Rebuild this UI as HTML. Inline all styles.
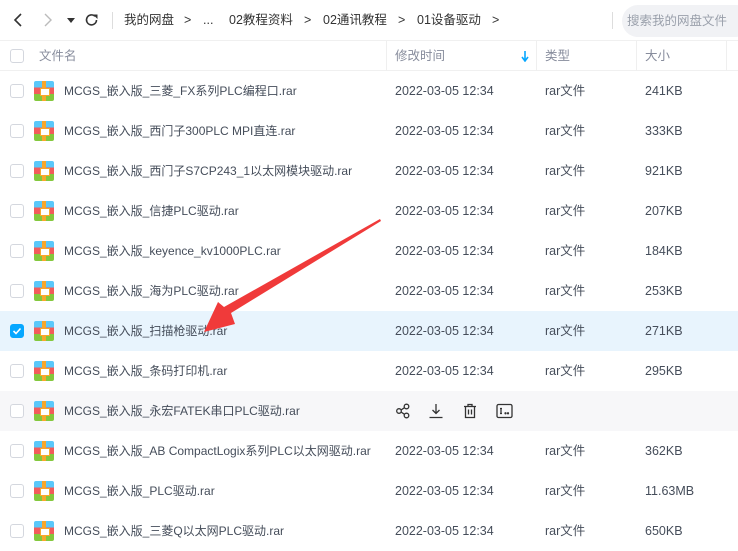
<!DOCTYPE html>
<html><head><meta charset="utf-8"><style>
*{margin:0;padding:0;box-sizing:border-box}
body{width:738px;height:544px;overflow:hidden;background:#fff;font-family:"Liberation Sans","Noto Sans CJK SC",sans-serif;font-size:13px;color:#454d5a;position:relative}
.top{position:absolute;left:0;top:0;width:738px;height:40px;}
.t{position:absolute;top:0;line-height:40px;font-size:12.5px;color:#333;white-space:nowrap}
.hdr{position:absolute;top:40px;left:0;width:738px;height:31px;border-top:1px solid #f0f0f0;border-bottom:1px solid #f0f0f0;color:#878c9c}
.hdr span{position:absolute;top:0;line-height:30px;font-size:12.5px}
.vl{position:absolute;top:0;width:1px;height:30px;background:#efefef}
.row{position:absolute;left:0;width:738px;height:40px}
.cb{position:absolute;left:10px;top:13px;width:14px;height:14px;border:1px solid #d4d7de;border-radius:3px;background:#fff}
.ic{position:absolute;left:34px;top:10px;width:20px;height:20px;border-radius:2px;overflow:hidden;background:linear-gradient(#5ac8fa 0 33%,#f35b5b 33% 66%,#83c83d 66%)}
.ic:before{content:"";position:absolute;left:8px;top:0;width:4px;height:20px;background:#f7a72b}
.ic:after{content:"";position:absolute;left:6px;top:7px;width:8px;height:6px;background:#fff;border:1px solid #f7a72b}
.c{position:absolute;top:0;line-height:40px;white-space:nowrap;font-size:12.5px}
.n{font-size:12px}
</style></head><body>
<div class="top">
<svg style="position:absolute;left:12px;top:12px" width="12" height="16"><path d="M9 2L3 8l6 6" stroke="#333" stroke-width="1.6" fill="none"/></svg>
<svg style="position:absolute;left:42px;top:12px" width="12" height="16"><path d="M3 2l6 6-6 6" stroke="#bbb" stroke-width="1.4" fill="none"/></svg>
<svg style="position:absolute;left:67px;top:18px" width="8" height="6"><path d="M0 0h8L4 5z" fill="#333"/></svg>
<svg style="position:absolute;left:84px;top:12px" width="16" height="16"><path d="M12.5 8A5 5 0 1 1 11 4.3" stroke="#333" stroke-width="1.6" fill="none"/><path d="M9 2.5h4.5V7z" fill="#333"/></svg>
<div style="position:absolute;left:112px;top:12px;width:1px;height:17px;background:#ddd"></div>
<span class="t" style="left:124px">我的网盘</span><span class="t" style="left:184px">&gt;</span><span class="t" style="left:203px">...</span>
<span class="t" style="left:229px">02教程资料</span><span class="t" style="left:304px">&gt;</span><span class="t" style="left:323px">02通讯教程</span><span class="t" style="left:398px">&gt;</span>
<span class="t" style="left:417px">01设备驱动</span><span class="t" style="left:492px">&gt;</span>
<div style="position:absolute;left:612px;top:12px;width:1px;height:17px;background:#ddd"></div>
<div style="position:absolute;left:622px;top:5px;width:130px;height:32px;border-radius:16px;background:#f1f2f5;color:#9aa0ab;padding-left:5px;line-height:32px;font-size:12.5px;white-space:nowrap">搜索我的网盘文件</div>
</div>
<div class="hdr">
<div class="cb" style="top:8px"></div>
<span style="left:39px">文件名</span>
<div class="vl" style="left:386px"></div><span style="left:395px">修改时间</span>
<svg style="position:absolute;left:521px;top:10px" width="8" height="11"><path d="M4 0v9M1 6l3 4 3-4" stroke="#06a7ff" stroke-width="1.6" fill="none"/></svg>
<div class="vl" style="left:536px"></div><span style="left:545px">类型</span>
<div class="vl" style="left:636px"></div><span style="left:645px">大小</span>
<div class="vl" style="left:726px"></div>
</div>
<div class="row" style="top:71px"><div class="cb"></div><div class="ic"></div><span class="c n" style="left:64px">MCGS_嵌入版_三菱_FX系列PLC编程口.rar</span><span class="c" style="left:395px">2022-03-05 12:34</span><span class="c" style="left:545px">rar文件</span><span class="c" style="left:645px">241KB</span></div>
<div class="row" style="top:111px"><div class="cb"></div><div class="ic"></div><span class="c n" style="left:64px">MCGS_嵌入版_西门子300PLC MPI直连.rar</span><span class="c" style="left:395px">2022-03-05 12:34</span><span class="c" style="left:545px">rar文件</span><span class="c" style="left:645px">333KB</span></div>
<div class="row" style="top:151px"><div class="cb"></div><div class="ic"></div><span class="c n" style="left:64px">MCGS_嵌入版_西门子S7CP243_1以太网模块驱动.rar</span><span class="c" style="left:395px">2022-03-05 12:34</span><span class="c" style="left:545px">rar文件</span><span class="c" style="left:645px">921KB</span></div>
<div class="row" style="top:191px"><div class="cb"></div><div class="ic"></div><span class="c n" style="left:64px">MCGS_嵌入版_信捷PLC驱动.rar</span><span class="c" style="left:395px">2022-03-05 12:34</span><span class="c" style="left:545px">rar文件</span><span class="c" style="left:645px">207KB</span></div>
<div class="row" style="top:231px"><div class="cb"></div><div class="ic"></div><span class="c n" style="left:64px">MCGS_嵌入版_keyence_kv1000PLC.rar</span><span class="c" style="left:395px">2022-03-05 12:34</span><span class="c" style="left:545px">rar文件</span><span class="c" style="left:645px">184KB</span></div>
<div class="row" style="top:271px"><div class="cb"></div><div class="ic"></div><span class="c n" style="left:64px">MCGS_嵌入版_海为PLC驱动.rar</span><span class="c" style="left:395px">2022-03-05 12:34</span><span class="c" style="left:545px">rar文件</span><span class="c" style="left:645px">253KB</span></div>
<div class="row" style="top:311px;background:#e8f4fd"><div class="cb" style="background:#06a7ff;border-color:#06a7ff"><svg width="12" height="12" style="position:absolute;left:0;top:0"><path d="M2.5 6l2.5 2.5 4.5-5" stroke="#fff" stroke-width="1.6" fill="none"/></svg></div><div class="ic"></div><span class="c n" style="left:64px">MCGS_嵌入版_扫描枪驱动.rar</span><span class="c" style="left:395px">2022-03-05 12:34</span><span class="c" style="left:545px">rar文件</span><span class="c" style="left:645px">271KB</span></div>
<div class="row" style="top:351px"><div class="cb"></div><div class="ic"></div><span class="c n" style="left:64px">MCGS_嵌入版_条码打印机.rar</span><span class="c" style="left:395px">2022-03-05 12:34</span><span class="c" style="left:545px">rar文件</span><span class="c" style="left:645px">295KB</span></div>
<div class="row" style="top:391px;background:#f7f7f9"><div class="cb"></div><div class="ic"></div><span class="c n" style="left:64px">MCGS_嵌入版_永宏FATEK串口PLC驱动.rar</span>
<svg style="position:absolute;left:395px;top:12px" width="16" height="16" fill="none" stroke="#333" stroke-width="1.3"><circle cx="4" cy="8" r="2.3"/><circle cx="11.5" cy="3.5" r="2.3"/><circle cx="11.5" cy="12.5" r="2.3"/><path d="M6 7l3.5-2.3M6 9l3.5 2.3"/></svg>
<svg style="position:absolute;left:428px;top:12px" width="16" height="16" fill="none" stroke="#333" stroke-width="1.3"><path d="M8 1v9M4.5 7L8 10.5 11.5 7M1.5 14.5h13"/></svg>
<svg style="position:absolute;left:462px;top:12px" width="16" height="16" fill="none" stroke="#333" stroke-width="1.3"><path d="M2 3.5h12M6 3.5V1.5h4v2M3.5 3.5v11h9v-11M6.5 6.5v5M9.5 6.5v5"/></svg>
<svg style="position:absolute;left:496px;top:12px" width="17" height="16" fill="none" stroke="#333" stroke-width="1.3"><rect x="1" y="1.5" width="15" height="13" rx="1.5"/><path d="M5 5.5v5M4 5.5h2M4 10.5h2"/><circle cx="9.5" cy="10.3" r=".5" fill="#333"/><circle cx="12" cy="10.3" r=".5" fill="#333"/></svg>
</div>
<div class="row" style="top:431px"><div class="cb"></div><div class="ic"></div><span class="c n" style="left:64px">MCGS_嵌入版_AB CompactLogix系列PLC以太网驱动.rar</span><span class="c" style="left:395px">2022-03-05 12:34</span><span class="c" style="left:545px">rar文件</span><span class="c" style="left:645px">362KB</span></div>
<div class="row" style="top:471px"><div class="cb"></div><div class="ic"></div><span class="c n" style="left:64px">MCGS_嵌入版_PLC驱动.rar</span><span class="c" style="left:395px">2022-03-05 12:34</span><span class="c" style="left:545px">rar文件</span><span class="c" style="left:645px">11.63MB</span></div>
<div class="row" style="top:511px"><div class="cb"></div><div class="ic"></div><span class="c n" style="left:64px">MCGS_嵌入版_三菱Q以太网PLC驱动.rar</span><span class="c" style="left:395px">2022-03-05 12:34</span><span class="c" style="left:545px">rar文件</span><span class="c" style="left:645px">650KB</span></div>
<svg style="position:absolute;left:0;top:0" width="738" height="544"><polygon points="380,219 381,221 231,313 235,324 204,332 218,302 224,307" fill="#f03a3a"/></svg>
</body></html>
